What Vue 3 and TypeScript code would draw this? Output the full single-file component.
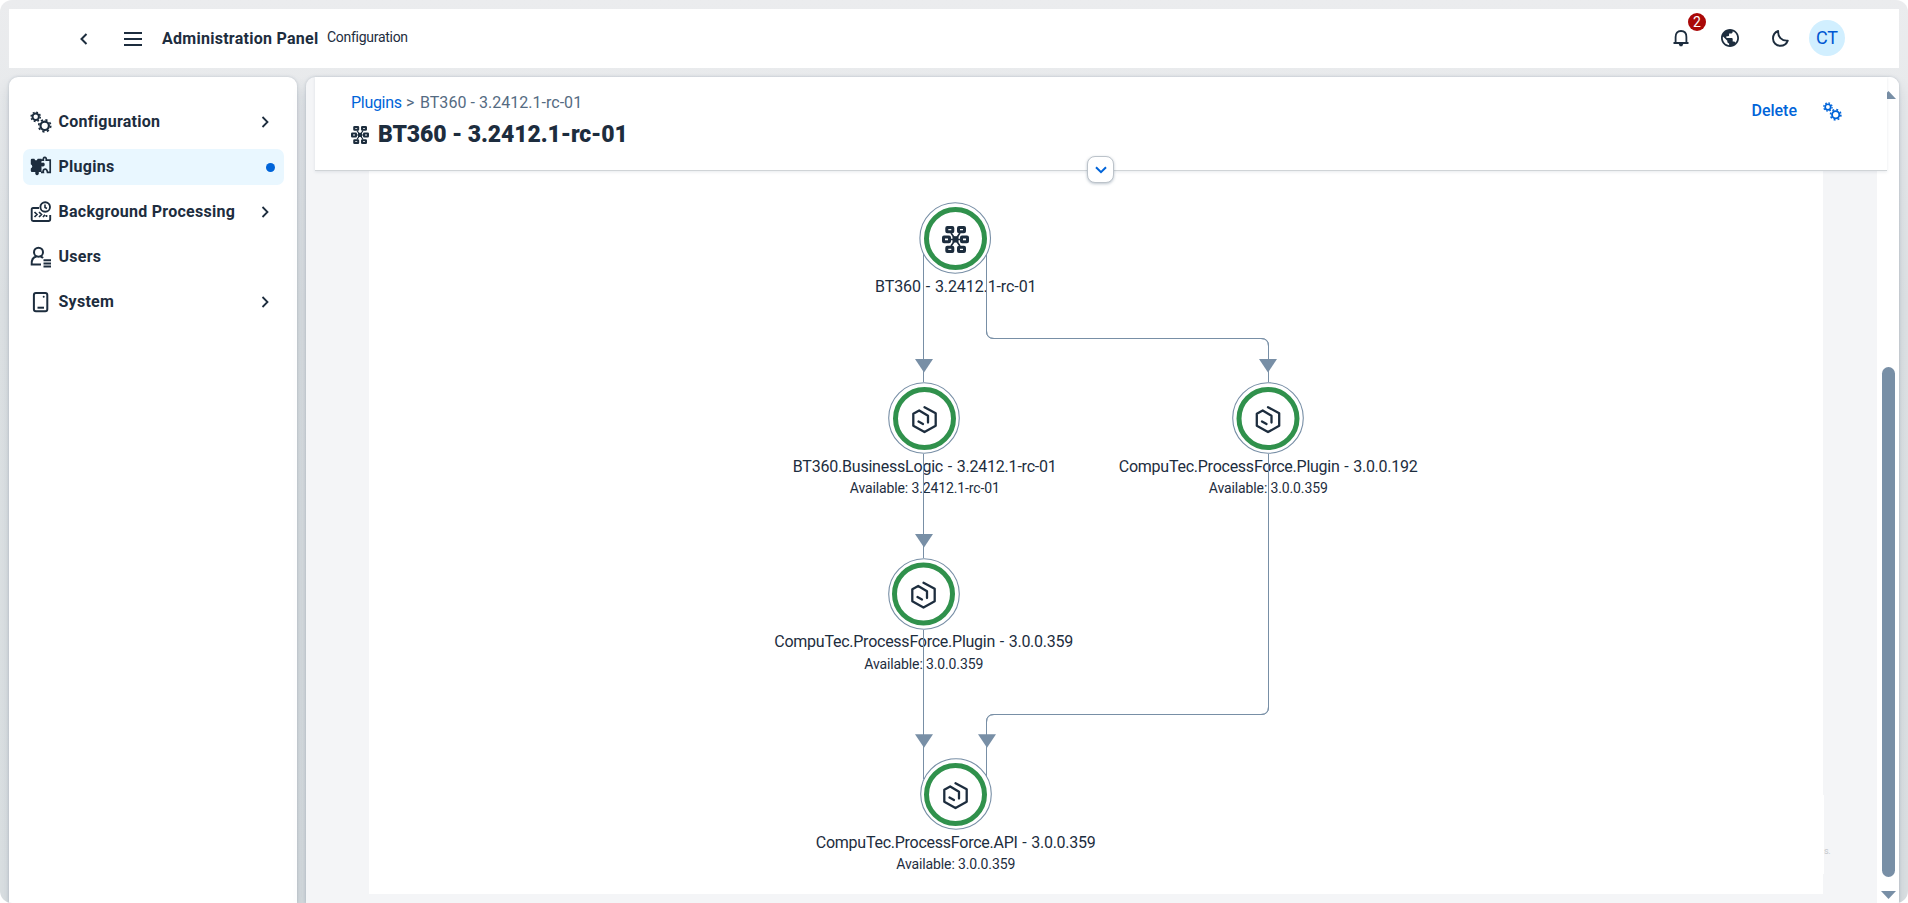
<script setup lang="ts">
interface MenuItem {
  id: string
  label: string
  expandable: boolean
  selected?: boolean
}
interface GraphNode {
  id: string
  x: number
  y: number
  ringX: number
  ringY: number
  icon: 'network' | 'hex'
  label: string
  labelWidth: number
  labelY: number
  sub?: string
  subWidth?: number
  subY?: number
}

const menu: MenuItem[] = [
  { id: 'config', label: 'Configuration', expandable: true },
  { id: 'plugins', label: 'Plugins', expandable: false, selected: true },
  { id: 'background', label: 'Background Processing', expandable: true },
  { id: 'users', label: 'Users', expandable: false },
  { id: 'system', label: 'System', expandable: true },
]

const nodes: GraphNode[] = [
  { id: 'root', x: 955.2, y: 238, ringX: 955.5, ringY: 238.5, icon: 'network', label: 'BT360 - 3.2412.1-rc-01', labelWidth: 161.5, labelY: 292 },
  { id: 'logic', x: 924, y: 418, ringX: 924.5, ringY: 418.5, icon: 'hex', label: 'BT360.BusinessLogic - 3.2412.1-rc-01', labelWidth: 264, labelY: 472, sub: 'Available: 3.2412.1-rc-01', subWidth: 150, subY: 493 },
  { id: 'plugin192', x: 1268, y: 418, ringX: 1268, ringY: 418.5, icon: 'hex', label: 'CompuTec.ProcessForce.Plugin - 3.0.0.192', labelWidth: 299, labelY: 472, sub: 'Available: 3.0.0.359', subWidth: 119, subY: 493 },
  { id: 'plugin359', x: 924, y: 594, ringX: 923.5, ringY: 594, icon: 'hex', label: 'CompuTec.ProcessForce.Plugin - 3.0.0.359', labelWidth: 299, labelY: 647, sub: 'Available: 3.0.0.359', subWidth: 119, subY: 669 },
  { id: 'api', x: 956, y: 794, ringX: 955.5, ringY: 794.5, icon: 'hex', label: 'CompuTec.ProcessForce.API - 3.0.0.359', labelWidth: 280, labelY: 848, sub: 'Available: 3.0.0.359', subWidth: 119, subY: 869 },
]

const edges: string[] = [
  'M923.5 254V382',
  'M986.5 254V331Q986.5 338.5 994 338.5H1261Q1268.5 338.5 1268.5 346V382',
  'M923.5 454V558',
  'M923.5 630V779',
  'M1268.5 454V707Q1268.5 714.5 1261 714.5H994Q986.5 714.5 986.5 722V777',
]

const arrows = [
  { x: 924, y: 359 },
  { x: 1268, y: 359 },
  { x: 924, y: 534 },
  { x: 924, y: 734.3 },
  { x: 987, y: 734.3 },
]
</script>

<template>
  <div class="frame">
    <header class="shell">
      <svg class="back" width="10" height="14" viewBox="0 0 10 14"><path d="M7.500 2L2.500 7L7.500 12" /></svg>
      <svg class="burger" width="18" height="14" viewBox="0 0 18 14"><path d="M0 1H18M0 7H18M0 13H18" /></svg>
      <strong class="product">Administration Panel</strong>
      <span class="section">Configuration</span>
      <div class="tools">
        <div class="bell">
          <svg width="16" height="17" viewBox="0 0 16 17">
            <path d="M.5 13H15.500M2.600 13V7Q2.600 1 8 1T13.400 7V13" fill="none" stroke="#1d2d3e" stroke-width="1.800" />
            <path d="M5.500 13.500H10.500L9.200 16.200H6.800Z" fill="#1d2d3e" />
          </svg>
          <span class="badge">2</span>
        </div>
        <svg class="globe" width="18" height="18" viewBox="2 2 20 20">
          <path fill="#1d2d3e" d="M12 2C6.480 2 2 6.480 2 12s4.480 10 10 10 10-4.480 10-10S17.520 2 12 2zm-1 17.930c-3.950-.49-7-3.850-7-7.930 0-.62.080-1.210.21-1.790L9 15v1c0 1.100.9 2 2 2v1.930zm6.900-2.540c-.26-.81-1-1.390-1.900-1.390h-1v-3c0-.55-.45-1-1-1H8v-2h2c.55 0 1-.45 1-1V7h2c1.100 0 2-.9 2-2v-.41c2.930 1.190 5 4.060 5 7.410 0 2.080-.8 3.970-2.100 5.390z" />
        </svg>
        <svg class="moon" width="17" height="17" viewBox="0 0 17 17"><path d="M6.200 1C5.600 6.500 9.500 11.200 15.800 10.600C14.500 14 11.800 15.800 8.500 15.800C4.300 15.800 1 12.700 1 8.600C1 5.200 3 2.200 6.200 1Z" /></svg>
        <span class="avatar">CT</span>
      </div>
    </header>

    <div class="body">
      <nav class="side">
        <div v-for="item in menu" :key="item.id" class="item" :class="{ selected: item.selected }">
          <svg class="icon" width="22" height="22" viewBox="0 0 22 22">
            <g v-if="item.id === 'config'">
              <circle cx="5.700" cy="5.800" r="3.200" stroke-width="2" /><circle cx="5.700" cy="5.800" r="4.600" stroke-width="1.500" stroke-dasharray="1.800 1.810" />
              <circle cx="14.700" cy="14.800" r="4.200" stroke-width="2.200" /><circle cx="14.700" cy="14.800" r="6" stroke-width="1.700" stroke-dasharray="2.200 2.510" />
            </g>
            <g v-else-if="item.id === 'plugins'">
              <path fill="#1d2d3e" stroke="none" d="M.8 4Q.8 2.800 2 2.800H4.300Q6 6 7.800 2.800H11.500V7Q14 5.500 14.800 8Q14.800 11.500 11.500 10.300V16H8.800V18Q7 20.500 5.300 18V16H2Q.8 16 .8 14.800V12.500Q3.800 10.500 .8 8.300Z" />
              <path stroke-width="1.700" d="M11 4.200H13.300Q13 1.300 14.800 1.300T16.300 4.200H20.200V16.300H17.500Q16.800 12.500 14.500 13.300Q12.700 14 13.300 16.300H11" />
            </g>
            <g v-else-if="item.id === 'background'" stroke-width="1.900">
              <path d="M9 7H3Q1.700 7 1.700 8.300V18.500Q1.700 20 3.200 20H18.500Q20.200 20 20.200 18.300V14" />
              <circle cx="15.200" cy="6" r="4.800" /><path d="M15 3.500V6.500L17 7.500" stroke-width="1.600" />
              <path d="M4.500 11L7 13.500L4.500 16M9 11L11.500 13.500L9 16M13 16L15 13.800M16.500 16V14" stroke-width="1.700" />
            </g>
            <g v-else-if="item.id === 'users'" stroke-width="2">
              <circle cx="8.500" cy="6.200" r="4.500" /><path d="M11 18.500H1.700Q1.200 11.500 6.500 10.500M10.500 10.500Q12 10.800 13 12M13.500 14.200H21M13.500 17.500H21M13.500 20.600H21" />
            </g>
            <g v-else stroke-width="2">
              <rect x="3.900" y="1.900" width="13.400" height="18.300" rx="2" /><path d="M7.500 16.700H14" /><circle cx="13.700" cy="5.800" r="1" fill="#1d2d3e" stroke="none" />
            </g>
          </svg>
          <span class="label">{{ item.label }}</span>
          <svg v-if="item.expandable" class="more" width="8" height="12" viewBox="0 0 8 12"><path d="M1.500 1L6.500 6L1.500 11" /></svg>
          <i v-if="item.selected" class="dot"></i>
        </div>
      </nav>

      <main class="page">
        <div class="column">
          <header class="title-bar">
            <div class="crumbs"><a>Plugins</a><span class="sep">&gt;</span><span class="current">BT360 - 3.2412.1-rc-01</span></div>
            <div class="title">
              <svg width="18" height="18" viewBox="0 0 27 27"><use href="#network" /></svg>
              <h1>BT360 - 3.2412.1-rc-01</h1>
            </div>
            <div class="actions">
              <span class="delete">Delete</span>
              <svg width="19" height="19" viewBox="0 0 22 22" fill="none" stroke="#0064d9">
                <circle cx="5.700" cy="5.800" r="3.200" stroke-width="2" /><circle cx="5.700" cy="5.800" r="4.800" stroke-width="1.500" stroke-dasharray="1.880 1.890" />
                <circle cx="14.700" cy="14.800" r="4.200" stroke-width="2.200" /><circle cx="14.700" cy="14.800" r="6" stroke-width="1.900" stroke-dasharray="2.200 2.510" />
              </svg>
            </div>
            <span class="expand"><svg width="12" height="8" viewBox="0 0 12 8"><path d="M1 1.200L6 6.200L11 1.200" /></svg></span>
          </header>
          <section class="content">
            <svg class="graph" width="1454" height="723" viewBox="369 171 1454 723">
              <defs>
                <g id="network" fill="none" stroke="#1d2d3e" stroke-width="3">
                  <path d="M9 7L18 20M18 7L9 20M8 13.500H19" stroke-width="1.600" />
                  <rect x="4.800" y="1.500" width="6" height="4.200" rx=".5" /><rect x="16.500" y="1.500" width="6" height="4.200" rx=".5" />
                  <rect x="1.500" y="11.100" width="6" height="4.600" rx=".5" /><rect x="19.500" y="11.100" width="6" height="4.600" rx=".5" />
                  <rect x="4.800" y="21.300" width="6" height="4.200" rx=".5" /><rect x="16.500" y="21.300" width="6" height="4.200" rx=".5" />
                  <rect x="11.500" y="11.200" width="4" height="4.300" stroke-width="2" />
                </g>
                <g id="hex" fill="none" stroke="#1d2d3e" stroke-width="2.300" stroke-linecap="round" stroke-linejoin="round">
                  <path d="M0 -11.300L11.200 -5.200V7.300L0 13.600L-11.200 7.300V-4.700L-5.300 -8L3.500 -2.700V4M-6 3L-1.500 5.500" />
                </g>
              </defs>
              <path v-for="d in edges" :key="d" :d="d" class="edge" />
              <path v-for="(a, i) in arrows" :key="i" :d="`M${a.x - 9} ${a.y}h18l-9 13.500z`" fill="#788fa6" />
              <g v-for="n in nodes" :key="n.id">
                <circle :cx="n.x" :cy="n.y" r="35.300" fill="#fff" stroke="#788fa6" stroke-width="1.100" />
                <circle :cx="n.ringX" :cy="n.ringY" r="29" fill="#fff" stroke="#30914c" stroke-width="5" />
                <use v-if="n.icon === 'network'" href="#network" x="942" y="226" />
                <use v-else href="#hex" :x="n.ringX" :y="n.ringY" />
                <text :x="n.ringX + 0.3 - n.labelWidth / 2" :y="n.labelY" :textLength="n.labelWidth" class="name">{{ n.label }}</text>
                <text v-if="n.sub" :x="n.ringX + 0.3 - (n.subWidth ?? 0) / 2" :y="n.subY" :textLength="n.subWidth" class="sub">{{ n.sub }}</text>
              </g>
              <path v-for="d in edges" :key="'over' + d" :d="d" class="edge" />
            </svg>
            <span class="fragment">s.</span>
          </section>
        </div>
        <div class="track">
          <svg class="up" width="15" height="8" viewBox="0 0 15 8"><path d="M7.500 0L15 8H0Z" /></svg>
          <div class="thumb"></div>
          <svg class="down" width="15" height="8" viewBox="0 0 15 8"><path d="M0 0H15L7.500 8Z" /></svg>
        </div>
      </main>
    </div>
  </div>
</template>

<style>
body { margin: 0; background: #fff; overflow: hidden; }
</style>

<style scoped>
* { box-sizing: border-box; }
.frame { width: 1908px; height: 903px; padding: 9px 9px 0; border-radius: 12px; overflow: hidden; color: #1d2d3e; font: 16px/20px Roboto, "Liberation Sans", sans-serif; background: linear-gradient(#ebecee 0, #e8eaec 90px, #dfe3e5 300px, #dce1e3 100%); display: flex; flex-direction: column; gap: 9px; }
.shell { height: 59px; flex: none; background: #fff; display: flex; align-items: center; padding: 0 54px 0 70px; }
.back { fill: none; stroke: #1d2d3e; stroke-width: 2; }
.burger { margin-left: 35px; fill: none; stroke: #1d2d3e; stroke-width: 2; }
.product { margin-left: 20px; width: 156px; white-space: nowrap; letter-spacing: .27px; }
.section { margin: -3px 0 0 9px; font-size: 14px; letter-spacing: -.28px; }
.tools { margin: -1px 0 0 auto; display: flex; align-items: center; }
.bell { position: relative; height: 17px; }
.bell svg { display: block; }
.badge { position: absolute; left: 15px; top: -17px; width: 18px; height: 18px; border-radius: 50%; background: #aa0808; color: #fff; font: 14px/18px Roboto, sans-serif; text-align: center; }
.globe { margin-left: 32px; }
.moon { margin-left: 33px; fill: none; stroke: #1d2d3e; stroke-width: 1.9; stroke-linejoin: round; }
.avatar { width: 36px; height: 36px; margin-left: 20px; border-radius: 50%; background: #d1efff; color: #0057d2; font-size: 18px; line-height: 36px; text-align: center; }
.body { flex: 1; min-height: 0; display: flex; gap: 9px; }
.side { width: 288px; background: #fff; border-radius: 9px 9px 0 0; padding: 27px 13px 0 14px; display: flex; flex-direction: column; gap: 9px; box-shadow: 0 0 3px rgba(85, 107, 130, .3), 0 9px 14px rgba(85, 107, 130, .2); }
.item { height: 36px; display: flex; align-items: center; padding: 0 9px 0 7px; border-radius: 7px; font-weight: 700; }
.item.selected { background: #e9f7ff; }
.icon { fill: none; stroke: #1d2d3e; }
.label { margin-left: 6.5px; letter-spacing: .27px; }
.more { margin-left: auto; margin-right: 6px; fill: none; stroke: #1d2d3e; stroke-width: 1.8; }
.dot { width: 9px; height: 9px; margin-left: auto; border-radius: 50%; background: #0064d9; }
.page { width: 1593px; display: flex; background: #f4f5f7; border-radius: 9px 9px 0 0; box-shadow: 0 0 3px rgba(85, 107, 130, .3), 0 9px 14px rgba(85, 107, 130, .2); }
.column { width: 1571px; display: flex; flex-direction: column; padding-left: 9px; }
.title-bar { position: relative; z-index: 1; width: 1572px; height: 94px; flex: none; background: #fff; padding: 16px 45px 0 36px; border-bottom: 1px solid #d0d4d7; box-shadow: 0 1px 3px rgba(85, 107, 130, .14); }
.crumbs { display: flex; color: #556b82; }
.crumbs a { color: #0064d9; width: 50px; letter-spacing: -.3px; }
.sep { width: 19px; padding-left: 5px; }
.current { letter-spacing: .03px; }
.title { display: flex; align-items: center; height: 32px; margin-top: 6px; gap: 9px; }
.title h1 { margin: 0; font-size: 23px; font-weight: 900; line-height: 32px; letter-spacing: -.13px; }
.actions { position: absolute; right: 45px; top: 23px; display: flex; align-items: center; height: 22px; gap: 26px; }
.delete { color: #0064d9; font-weight: 500; }
.expand { position: absolute; left: 772px; top: 79px; width: 27px; height: 27px; border: 1px solid #bcc3ca; border-radius: 8px; background: #fff; box-shadow: 0 1px 3px rgba(85, 107, 130, .4); display: flex; align-items: center; justify-content: center; }
.expand svg { fill: none; stroke: #0064d9; stroke-width: 2; }
.content { position: relative; width: 1454px; height: 723px; margin-left: 54px; background: #fff; }
.graph { display: block; }
.edge { fill: none; stroke: #788fa6; stroke-width: 1; }
.name { font: 16px Roboto, sans-serif; fill: #1d2d3e; word-spacing: 1px; }
.sub { font: 14px Roboto, sans-serif; fill: #1d2d3e; }
.fragment { position: absolute; left: 1454px; top: 624px; height: 79px; padding-top: 47px; border-left: 1px solid #fff; color: #c2c5c9; font-size: 9px; line-height: 18px; letter-spacing: -.4px; }
.track { width: 22px; background: #fff; border-radius: 0 9px 0 0; display: flex; flex-direction: column; align-items: center; padding: 14px 0 4px 1px; }
.track svg { fill: #788fa6; flex: none; }
.thumb { width: 13px; height: 510px; margin-top: 268px; border-radius: 7px; background: #788fa6; }
.down { margin-top: auto; }
</style>
